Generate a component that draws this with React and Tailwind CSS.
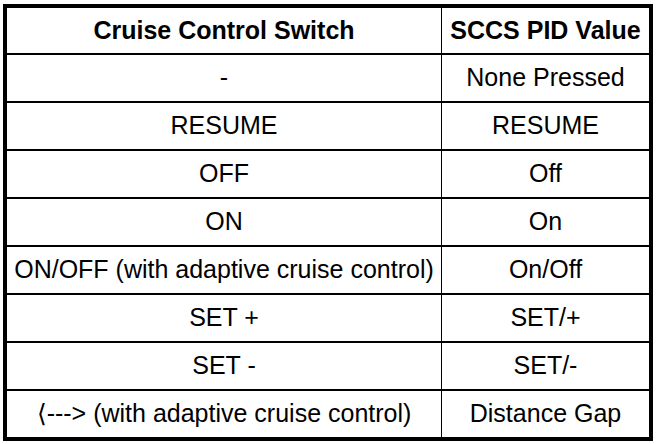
import React from "react";

const rows = [
  ["-", "None Pressed"],
  ["RESUME", "RESUME"],
  ["OFF", "Off"],
  ["ON", "On"],
  ["ON/OFF (with adaptive cruise control)", "On/Off"],
  ["SET +", "SET/+"],
  ["SET -", "SET/-"],
  ["\u27E8---> (with adaptive cruise control)", "Distance Gap"],
];

export default function App() {
  return (
    <div className="w-[672px] h-[444px] bg-white pl-[3px] pt-[4px] text-black" style={{ fontFamily: '"Liberation Sans", Arial, sans-serif' }}>
      <div className="w-[650px] border-4 border-black">
        <div className="flex h-[45px] text-[25px] font-bold">
          <div className="w-[435px] border-r border-black flex items-center justify-center">Cruise Control Switch</div>
          <div className="flex-1 flex items-center justify-center">SCCS PID Value</div>
        </div>
        {rows.map(([a, b], i) => (
          <div key={i} className="flex h-[48px] border-t-2 border-black text-[25px]">
            <div className="w-[435px] border-r border-black flex items-center justify-center whitespace-nowrap">{a}</div>
            <div className="flex-1 flex items-center justify-center whitespace-nowrap">{b}</div>
          </div>
        ))}
      </div>
    </div>
  );
}
